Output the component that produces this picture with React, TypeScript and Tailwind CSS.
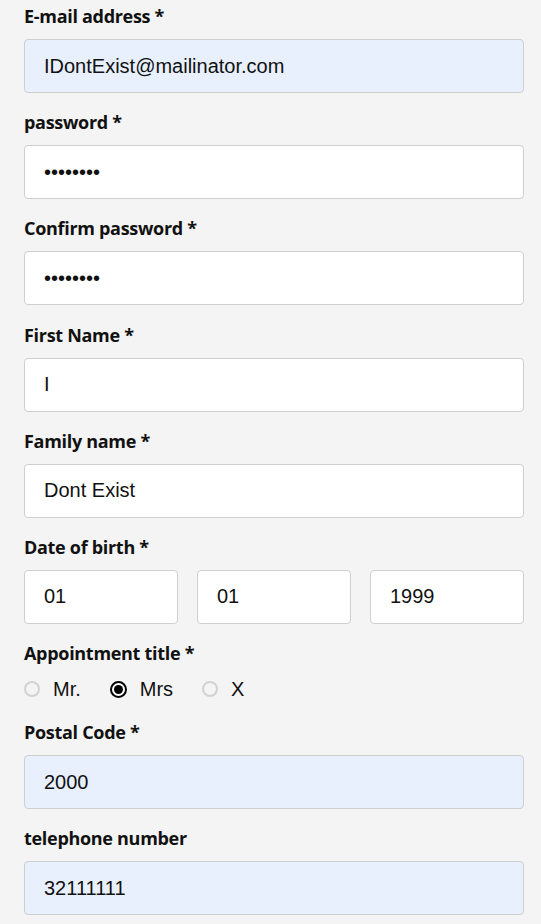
import React from 'react';

const labelCls =
  "block text-[18px] leading-6 font-bold text-[#111] tracking-[-0.3px] mb-[11px] font-['Open_Sans',Arial,sans-serif]";

const inputBase =
  "block w-full h-[54px] rounded-[4px] border border-[#cfcfcf] px-[19px] text-[20px] text-[#111] outline-none font-['Liberation_Sans',Arial,sans-serif]";

type FieldProps = {
  label: string;
  value: string;
  type?: string;
  autofill?: boolean;
  textClass?: string;
};

const Field: React.FC<FieldProps> = ({ label, value, type = 'text', autofill, textClass }) => (
  <div className="mb-[17.2px]">
    <label className={labelCls}>{label}</label>
    <input
      type={type}
      readOnly
      defaultValue={value}
      className={`${inputBase} ${autofill ? 'bg-[#e8f0fe]' : 'bg-white'} ${textClass || ''}`}
    />
  </div>
);

const Radio: React.FC<{ label: string; checked?: boolean }> = ({ label, checked }) => (
  <label className="flex items-center gap-[13px]">
    {checked ? (
      <span className="w-[17px] h-[17px] rounded-full border-[2px] border-black bg-white flex items-center justify-center">
        <span className="w-[9px] h-[9px] rounded-full bg-black"></span>
      </span>
    ) : (
      <span className="w-[16px] h-[16px] rounded-full border-[2px] border-[#d2d2d2] bg-[#f4f4f4]"></span>
    )}
    <span className="text-[20px] text-[#111] font-['Liberation_Sans',Arial,sans-serif]">{label}</span>
  </label>
);

const App: React.FC = () => {
  return (
    <div className="min-h-screen w-[541px] bg-[#f4f4f4] pl-[24px] pr-[17px] pt-1 pb-4 overflow-hidden">
      <Field label="E-mail address *" value="IDontExist@mailinator.com" type="email" autofill />
      <Field label="password *" value="12345678" type="password" />
      <Field label="Confirm password *" value="12345678" type="password" />
      <Field label="First Name *" value="I" textClass="text-[#1f2a6b]" />
      <Field label="Family name *" value="Dont Exist" />

      {/* Date of birth */}
      <div className="mb-[17.2px]">
        <label className={labelCls}>Date of birth *</label>
        <div className="grid grid-cols-3 gap-[19px]">
          <input readOnly defaultValue="01" className={`${inputBase} bg-white`} />
          <input readOnly defaultValue="01" className={`${inputBase} bg-white`} />
          <input readOnly defaultValue="1999" className={`${inputBase} bg-white`} />
        </div>
      </div>

      {/* Title */}
      <div className="mb-[18px]">
        <label className={labelCls}>Appointment title *</label>
        <div className="flex items-center h-[26px] gap-[29px]">
          <Radio label="Mr." />
          <Radio label="Mrs" checked />
          <Radio label="X" />
        </div>
      </div>

      <Field label="Postal Code *" value="2000" autofill />
      <Field label="telephone number" value="32111111" type="tel" autofill />
    </div>
  );
};

export default App;
